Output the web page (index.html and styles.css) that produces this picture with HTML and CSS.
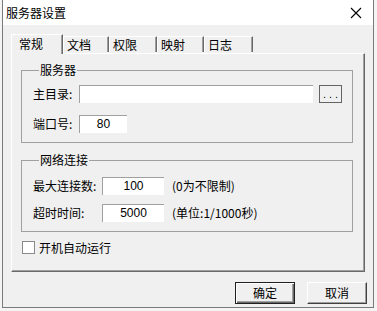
FILE: index.html
```html
<!DOCTYPE html>
<html lang="zh">
<head>
    <meta charset="UTF-8">
    <title>服务器设置</title>
    <link rel="stylesheet" href="styles.css">
</head>
<body>
    <div class="window">
        <div class="titlebar">
            <span class="title">服务器设置</span>
            <svg class="close" width="12" height="12" viewBox="0 0 12 12">
                <path d="M1 1 L11 11 M11 1 L1 11" stroke="#000" stroke-width="1.1" fill="none"/>
            </svg>
        </div>
        <div class="client">
            <div class="tabs">
                <div class="tab active">常规</div>
                <div class="tab t2">文档</div>
                <div class="tab t3">权限</div>
                <div class="tab t4">映射</div>
                <div class="tab t5">日志</div>
            </div>
            <div class="panel">
                <fieldset class="group g1">
                    <legend>服务器</legend>
                    <div class="row">
                        <label class="lbl">主目录:</label>
                        <div class="edit path"></div>
                        <button class="browse">...</button>
                    </div>
                    <div class="row r2">
                        <label class="lbl">端口号:</label>
                        <div class="edit port">80</div>
                    </div>
                </fieldset>
                <fieldset class="group g2">
                    <legend>网络连接</legend>
                    <div class="row">
                        <label class="lbl wide">最大连接数:</label>
                        <div class="edit num">100</div>
                        <span class="hint">(0为不限制)</span>
                    </div>
                    <div class="row r2b">
                        <label class="lbl wide">超时时间:</label>
                        <div class="edit num">5000</div>
                        <span class="hint">(单位:1/1000秒)</span>
                    </div>
                </fieldset>
                <div class="check">
                    <span class="box"></span>
                    <span>开机自动运行</span>
                </div>
            </div>
            <div class="buttons">
                <button class="btn default">确定</button>
                <button class="btn">取消</button>
            </div>
        </div>
    </div>
</body>
</html>
```

FILE: styles.css
```css
body {
    margin: 0;
    padding: 0;
    background: #f4f4f4;
    font-family: "Liberation Sans", "Noto Sans CJK SC", sans-serif;
    font-size: 12px;
    color: #000;
    width: 377px;
    height: 311px;
    overflow: hidden;
}

.window {
    margin-left: 2px;
    width: 372px;
    height: 308px;
    box-sizing: border-box;
    border: 1px solid #7a7a7a;
    border-top: none;
    background: #f0f0f0;
}

.titlebar {
    height: 25px;
    background: #fff;
    display: flex;
    align-items: center;
    justify-content: space-between;
    padding: 0 11px 0 3px;
}
.title {
    font-size: 12px;
    line-height: 14px;
    font-family: "Noto Sans CJK SC", sans-serif;
}

.client {
    padding-top: 8px;
}

.tabs {
    display: flex;
    align-items: flex-end;
    height: 20px;
    padding-left: 8px;
    position: relative;
    z-index: 1;
}
.tab {
    height: 16px;
    box-sizing: border-box;
    border-top: 1px solid #fff;
    border-left: 1px solid #fff;
    border-right: 1px solid #696969;
    box-shadow: inset -1px 0 0 #a0a0a0;
    padding: 0 0 0 3px;
    line-height: 15px;
    font-family: "Noto Sans CJK SC", sans-serif;
    margin-bottom: 1px;
}
.tab.active {
    height: 20px;
    width: 52px;
    padding-left: 7px;
    line-height: 18px;
    margin-bottom: -1px;
    background: #f0f0f0;
}
.t2 { width: 46px; }
.t3 { width: 48px; }
.t4 { width: 47px; }
.t5 { width: 49px; }

.panel {
    margin-left: 8px;
    width: 354px;
    height: 219px;
    box-sizing: border-box;
    border-top: 1px solid #fff;
    border-left: 1px solid #fff;
    border-right: 1px solid #696969;
    border-bottom: 1px solid #696969;
    box-shadow: inset -1px -1px 0 #a0a0a0;
    padding: 9px 0 0 9px;
}

.group {
    margin: 0;
    width: 332px;
    box-sizing: border-box;
    border: 1px solid #a0a0a0;
    padding: 8px 0 9px 11px;
    min-width: 0;
}
.group legend {
    font-family: "Noto Sans CJK SC", sans-serif;
    padding: 0 1px;
    margin-left: 6px;
    line-height: 14px;
}
.g2 {
    margin-top: 10px;
    padding-top: 10px;
}

.row {
    display: flex;
    align-items: center;
    height: 18px;
}
.r2 { margin-top: 12px; }
.r2b { margin-top: 9px; }

.lbl {
    width: 46px;
    font-family: "Noto Sans CJK SC", sans-serif;
    line-height: 14px;
}
.lbl.wide { width: 69px; }

.edit {
    height: 18px;
    box-sizing: border-box;
    background: #fff;
    border-top: 1px solid #a0a0a0;
    border-left: 1px solid #a0a0a0;
    font-family: "Liberation Sans", sans-serif;
    line-height: 16px;
    text-align: center;
}
.path { width: 234px; }
.port { width: 48px; }
.num { width: 62px; }

.browse {
    margin-left: 6px;
    width: 23px;
    height: 18px;
    box-sizing: border-box;
    border: 1px solid #646464;
    background: #f0f0f0;
    padding: 0 0 0 3px;
    font-size: 11px;
    letter-spacing: 3px;
    line-height: 14px;
    font-family: "Liberation Sans", sans-serif;
}

.hint {
    margin-left: 8px;
    font-family: "Noto Sans CJK SC", sans-serif;
    line-height: 14px;
}

.check {
    display: flex;
    align-items: center;
    margin-top: 9px;
    height: 13px;
    font-family: "Noto Sans CJK SC", sans-serif;
}
.box {
    width: 13px;
    height: 13px;
    box-sizing: border-box;
    margin-left: 1px;
    margin-right: 4px;
    background: #fff;
    border: 1px solid #8a8a8a;
}

.buttons {
    display: flex;
    justify-content: flex-end;
    gap: 12px;
    padding: 10px 6px 0 0;
}
.btn {
    width: 60px;
    height: 22px;
    box-sizing: border-box;
    padding: 0;
    background: #f0f0f0;
    border-top: 1px solid #fff;
    border-left: 1px solid #fff;
    border-right: 1px solid #404040;
    border-bottom: 1px solid #404040;
    box-shadow: inset -1px -1px 0 #a0a0a0;
    font-family: "Noto Sans CJK SC", sans-serif;
    font-size: 12px;
    line-height: 18px;
}
.btn.default {
    border: 1px solid #202020;
    box-shadow: inset 1px 1px 0 #fff, inset -1px -1px 0 #696969, inset -2px -2px 0 #a0a0a0;
}
```
